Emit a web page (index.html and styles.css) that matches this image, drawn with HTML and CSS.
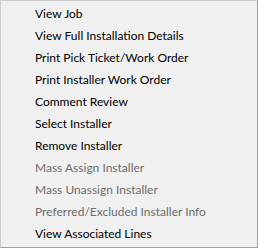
FILE: index.html
```html
<!DOCTYPE html>
<html lang="en">
<head>
    <meta charset="UTF-8">
    <title>Context Menu</title>
    <link rel="stylesheet" href="styles.css">
</head>
<body>
    <div class="context-menu">
        <div class="menu-item">View Job</div>
        <div class="menu-item">View Full Installation Details</div>
        <div class="menu-item">Print Pick Ticket/Work Order</div>
        <div class="menu-item">Print Installer Work Order</div>
        <div class="menu-item">Comment Review</div>
        <div class="menu-item">Select Installer</div>
        <div class="menu-item">Remove Installer</div>
        <div class="menu-item disabled">Mass Assign Installer</div>
        <div class="menu-item disabled">Mass Unassign Installer</div>
        <div class="menu-item disabled">Preferred/Excluded Installer Info</div>
        <div class="menu-item">View Associated Lines</div>
    </div>
</body>
</html>
```

FILE: styles.css
```css
body {
    margin: 0;
    background-color: #ffffff;
    font-family: 'Lato', sans-serif;
}
.context-menu {
    width: 258px;
    height: 248px;
    background-color: #f0f0f0;
    border: 1px solid #cccccc;
    border-right-color: #a0a0a0;
    border-bottom-color: #a0a0a0;
    padding: 2px 0 4px;
    box-sizing: border-box;
    display: flex;
    flex-direction: column;
}
.menu-item {
    height: 22px;
    line-height: 22px;
    padding-left: 34px;
    font-size: 12px;
    color: #000000;
    white-space: nowrap;
}
.menu-item.disabled {
    color: #6d6d6d;
}
```
